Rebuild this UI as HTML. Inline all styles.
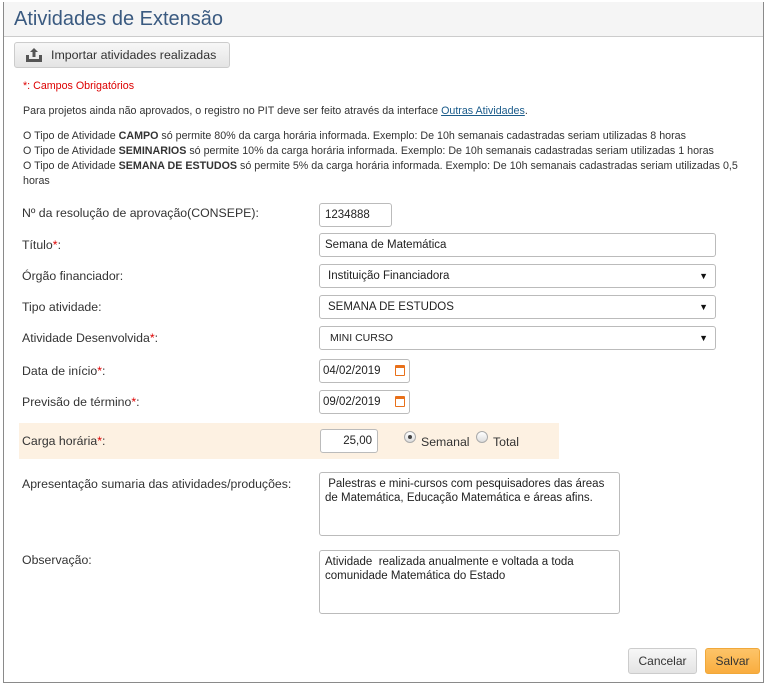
<!DOCTYPE html>
<html><head><meta charset="utf-8"><style>
body{margin:0;width:766px;height:686px;background:#fff;font-family:"Liberation Sans",sans-serif;position:relative;overflow:hidden;color:#333}
.frame{position:absolute;left:3px;top:2px;width:759px;height:680px;border:1px solid #8a8a8a;border-top:none;box-sizing:content-box}
.hdr{position:absolute;left:4px;top:2px;width:759px;height:34px;background:#f5f5f5;border-bottom:1px solid #ccc}
.hdr span{position:absolute;left:10px;top:6px;font-size:20px;color:#3a5a80}
.a{position:absolute;white-space:nowrap}
.s{font-size:10.7px;color:#333}
.lbl{font-size:12.3px;color:#333}
.in{position:absolute;border:1px solid #bbb;border-radius:3px;background:#fff;box-sizing:border-box;font-size:11.5px;color:#222;padding:0 5px;line-height:22px}
.sel:after{content:"▼";position:absolute;right:7px;top:0;font-size:9px;color:#111}
.btn{position:absolute;border:1px solid #ccc;border-radius:3px;background:linear-gradient(#f7f7f7,#e4e4e4);box-sizing:border-box;font-size:12.4px;color:#333;text-align:center}
.cal{position:absolute;right:4px;top:5px;width:10px;height:11px;border:1.5px solid #e8701a;border-top-width:3px;box-sizing:border-box;border-radius:1px}
.rad{position:absolute;width:12px;height:12px;border-radius:50%;border:1px solid #aaa;background:linear-gradient(#fff,#ddd);box-sizing:border-box}
</style></head><body>
<div class="frame"></div>
<div class="hdr"><span>Atividades de Extensão</span></div>
<div class="btn" style="left:14px;top:42px;width:216px;height:26px;line-height:24px;text-align:left;padding-left:36px">Importar atividades realizadas
<svg style="position:absolute;left:10px;top:4px" width="18" height="16" viewBox="0 0 18 16"><path d="M1 8v7h16V8h-3v4H4V8z" fill="#555"/><path d="M9 1l-4 4h2.5v5h3V5H13z" fill="#555"/></svg></div>
<div class="a s" style="left:23px;top:80px;color:#d00">*: Campos Obrigatórios</div>
<div class="a s" style="left:23px;top:105px">Para projetos ainda não aprovados, o registro no PIT deve ser feito através da interface <span style="color:#1a5b8a;text-decoration:underline">Outras Atividades</span>.</div>
<div class="a s" style="left:23px;top:129px;line-height:15px">O Tipo de Atividade <b>CAMPO</b> só permite 80% da carga horária informada. Exemplo: De 10h semanais cadastradas seriam utilizadas 8 horas<br>O Tipo de Atividade <b>SEMINARIOS</b> só permite 10% da carga horária informada. Exemplo: De 10h semanais cadastradas seriam utilizadas 1 horas<br>O Tipo de Atividade <b>SEMANA DE ESTUDOS</b> só permite 5% da carga horária informada. Exemplo: De 10h semanais cadastradas seriam utilizadas 0,5<br>horas</div>
<div class="a lbl" style="left:22px;top:206px">Nº da resolução de aprovação(CONSEPE):</div>
<div class="in" style="left:319px;top:203px;width:73px;height:24px">1234888</div>
<div class="a lbl" style="left:22px;top:238px">Título<span style="color:#d00">*</span>:</div>
<div class="in" style="left:319px;top:233px;width:397px;height:24px">Semana de Matemática</div>
<div class="a lbl" style="left:22px;top:269px">Órgão financiador:</div>
<div class="in sel" style="left:319px;top:264px;width:397px;height:24px;padding-left:8px">Instituição Financiadora</div>
<div class="a lbl" style="left:22px;top:300px">Tipo atividade:</div>
<div class="in sel" style="left:319px;top:295px;width:397px;height:24px;padding-left:8px">SEMANA DE ESTUDOS</div>
<div class="a lbl" style="left:22px;top:331px">Atividade Desenvolvida<span style="color:#d00">*</span>:</div>
<div class="in sel" style="left:319px;top:326px;width:397px;height:24px;padding-left:10px;font-size:10.5px">MINI CURSO</div>
<div class="a lbl" style="left:22px;top:364px">Data de início<span style="color:#d00">*</span>:</div>
<div class="in" style="left:319px;top:359px;width:91px;height:24px;padding-left:3px">04/02/2019<span class="cal"></span></div>
<div class="a lbl" style="left:22px;top:395px">Previsão de término<span style="color:#d00">*</span>:</div>
<div class="in" style="left:319px;top:390px;width:91px;height:24px;padding-left:3px">09/02/2019<span class="cal"></span></div>
<div class="a" style="left:19px;top:423px;width:540px;height:36px;background:#fdf1e2"></div>
<div class="a lbl" style="left:22px;top:434px">Carga horária<span style="color:#d00">*</span>:</div>
<div class="in" style="left:320px;top:429px;width:58px;height:24px;text-align:right">25,00</div>
<div class="rad" style="left:404px;top:431px"><div style="position:absolute;left:3px;top:3px;width:4px;height:4px;border-radius:50%;background:#444"></div></div>
<div class="a lbl" style="left:421px;top:435px">Semanal</div>
<div class="rad" style="left:476px;top:431px"></div>
<div class="a lbl" style="left:493px;top:435px">Total</div>
<div class="a lbl" style="left:22px;top:477px">Apresentação sumaria das atividades/produções:</div>
<div class="in" style="left:319px;top:472px;width:301px;height:64px;line-height:14px;padding-top:4px;white-space:normal">&nbsp;Palestras e mini-cursos com pesquisadores das áreas de Matemática, Educação Matemática e áreas afins.</div>
<div class="a lbl" style="left:22px;top:553px">Observação:</div>
<div class="in" style="left:319px;top:550px;width:301px;height:64px;line-height:14px;padding-top:4px;white-space:normal">Atividade&nbsp; realizada anualmente e voltada a toda comunidade Matemática do Estado</div>
<div class="btn" style="left:628px;top:648px;width:69px;height:26px;line-height:24px;font-size:12px">Cancelar</div>
<div class="btn" style="left:705px;top:648px;width:55px;height:26px;line-height:24px;font-size:12px;background:linear-gradient(#fdc469,#f9ad3f);border-color:#f0a83a">Salvar</div>
</body></html>
